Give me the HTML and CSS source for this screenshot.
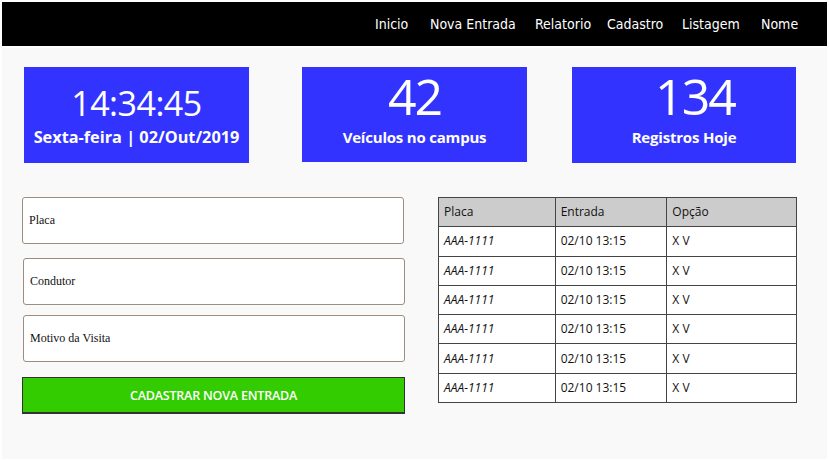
FILE: index.html
```html
<!DOCTYPE html>
<html lang="pt">
<head>
<meta charset="utf-8">
<title>Controle de Entrada</title>
<link rel="stylesheet" href="styles.css">
</head>
<body>
<div class="frame">
  <header class="topbar">
    <nav class="nav">
      <a class="nav-item w-inicio">Inicio</a>
      <a class="nav-item w-nova">Nova Entrada</a>
      <a class="nav-item w-rel">Relatorio</a>
      <a class="nav-item w-cad">Cadastro</a>
      <a class="nav-item w-list">Listagem</a>
      <a class="nav-item w-nome">Nome</a>
    </nav>
  </header>
  <main class="main">
    <section class="cards">
      <div class="card card-1">
        <div class="card-time">14:34:45</div>
        <div class="card-label">Sexta-feira | 02/Out/2019</div>
      </div>
      <div class="card card-2">
        <div class="card-num">42</div>
        <div class="card-label">Veículos no campus</div>
      </div>
      <div class="card card-3">
        <div class="card-num">134</div>
        <div class="card-label">Registros Hoje</div>
      </div>
    </section>
    <section class="lower">
      <form class="form">
        <div class="field f-placa">Placa</div>
        <div class="field f-condutor">Condutor</div>
        <div class="field f-motivo">Motivo da Visita</div>
        <div class="btn">CADASTRAR NOVA ENTRADA</div>
      </form>
      <table class="grid">
        <thead>
          <tr><th class="c1">Placa</th><th class="c2">Entrada</th><th class="c3">Opção</th></tr>
        </thead>
        <tbody>
          <tr><td class="plate">AAA-1111</td><td>02/10 13:15</td><td>X V</td></tr>
          <tr><td class="plate">AAA-1111</td><td>02/10 13:15</td><td>X V</td></tr>
          <tr><td class="plate">AAA-1111</td><td>02/10 13:15</td><td>X V</td></tr>
          <tr><td class="plate">AAA-1111</td><td>02/10 13:15</td><td>X V</td></tr>
          <tr><td class="plate">AAA-1111</td><td>02/10 13:15</td><td>X V</td></tr>
          <tr><td class="plate">AAA-1111</td><td>02/10 13:15</td><td>X V</td></tr>
        </tbody>
      </table>
    </section>
  </main>
</div>
</body>
</html>
```
FILE: styles.css
```css
* { box-sizing: border-box; }
html, body { margin: 0; padding: 0; background: #ffffff; }
body { width: 829px; height: 461px; overflow: hidden; font-family: "Open Sans", "DejaVu Sans", sans-serif; }

.frame { padding: 2px 2px 0 2px; display: flex; flex-direction: column; gap: 2px; }

.topbar { height: 44px; background: #000; display: flex; align-items: center; }
.nav { display: flex; margin-left: 373px; padding-bottom: 1px; }
.nav-item { color: #fff; font-family: "DejaVu Sans Condensed", "DejaVu Sans", sans-serif; font-size: 14px; white-space: nowrap; }
.w-inicio { width: 55px; }
.w-nova { width: 105px; }
.w-rel { width: 72px; }
.w-cad { width: 75px; }
.w-list { width: 79px; }
.w-nome { width: 40px; }

.main { height: 411px; background: #f9f9f9; padding: 19px 0 0 0; }

.cards { display: flex; padding-left: 22px; }
.card { background: #3333ff; color: #fff; width: 225px; height: 96px; display: flex; flex-direction: column; align-items: center; }
.card-2 { margin-left: 53px; height: 95px; }
.card-3 { margin-left: 45px; width: 224px; }
.card-time { font-size: 34px; line-height: 40px; margin-top: 16px; letter-spacing: -0.5px; font-weight: 500; }
.card-num { font-size: 50px; line-height: 52px; margin-top: 3px; letter-spacing: -2px; font-weight: 500; }
.card-3 .card-num { margin-left: 22px; }
.card-label { font-size: 15px; font-weight: 700; line-height: 20px; margin-top: 5px; letter-spacing: -0.2px; }
.card-1 .card-label { margin-top: 4px; font-size: 16.3px; letter-spacing: 0; }

.lower { display: flex; margin-top: 34px; padding-left: 20px; }
.form { width: 384px; display: flex; flex-direction: column; }
.field { background: #fff; border: 1px solid #9b8e80; border-radius: 3px; height: 47px; padding-left: 6px; display: flex; align-items: center; font-family: "Liberation Serif", serif; font-size: 12px; color: #111; }
.f-placa { width: 382px; }
.f-condutor { margin-top: 14px; margin-left: 1px; width: 382px; }
.f-motivo { margin-top: 10px; margin-left: 1px; width: 382px; }
.btn { margin-top: 15px; width: 383px; height: 37px; background: #33cc00; border: 1px solid #333; border-bottom-width: 2px; display: flex; align-items: center; justify-content: center; color: #fff; font-size: 12.5px; font-weight: 600; letter-spacing: -0.2px; }

.grid { margin-left: 32px; border-collapse: collapse; width: 359px; background: #fff; font-size: 12px; color: #111; align-self: flex-start; }
.grid th, .grid td { border: 1px solid #444; height: 29.3px; line-height: 16px; padding: 0 0 0 5px; text-align: left; font-weight: 400; }
.grid th { background: #cccccc; }
.grid .c1 { width: 117px; }
.grid .c2 { width: 112px; }
.grid .c3 { width: 130px; }
.grid .plate { font-style: italic; }
```
